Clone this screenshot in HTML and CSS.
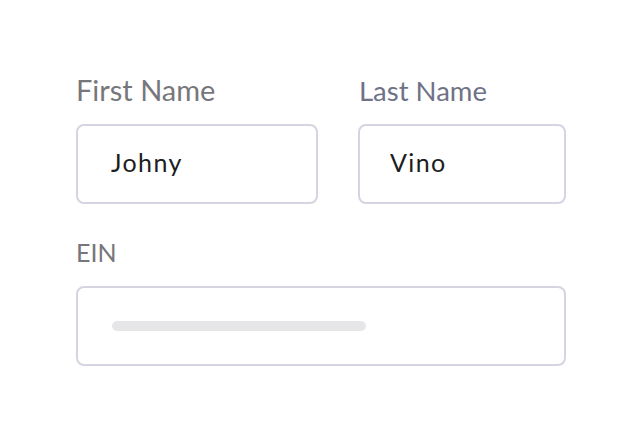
FILE: index.html
```html
<!DOCTYPE html>
<html>
<head>
<meta charset="utf-8">
<link rel="stylesheet" href="styles.css">
</head>
<body>
<form class="form">
  <div class="row">
    <div class="field field-first">
      <div class="label label-first">First Name</div>
      <div class="input"><span class="value">Johny</span></div>
    </div>
    <div class="field field-last">
      <div class="label label-last">Last Name</div>
      <div class="input"><span class="value">Vino</span></div>
    </div>
  </div>
  <div class="field field-ein">
    <div class="label label-ein">EIN</div>
    <div class="input"><span class="skeleton"></span></div>
  </div>
</form>
</body>
</html>
```
FILE: styles.css
```css
html, body {
  margin: 0;
  padding: 0;
  background: #ffffff;
}
body {
  font-family: "Lato", "Noto Sans", sans-serif;
  width: 642px;
  height: 442px;
  overflow: hidden;
}
.form {
  padding: 74px 0 0 76px;
  width: 490px;
}
.row {
  display: grid;
  grid-template-columns: 242px 208px;
  column-gap: 40px;
}
.label {
  box-sizing: border-box;
  height: 32px;
  font-size: 29px;
  line-height: 32px;
  color: #77777b;
  margin-bottom: 18px;
  white-space: nowrap;
}
.label-last {
  color: #6f7287;
  font-size: 27.5px;
  padding-top: 1px;
  padding-left: 1px;
}
.label-ein {
  font-size: 25px;
}
.field-ein {
  margin-top: 32px;
}
.input {
  box-sizing: border-box;
  height: 80px;
  border: 2px solid #d4d5e0;
  border-radius: 8px;
  display: flex;
  align-items: center;
  padding-left: 33px;
}
.field-first .input,
.field-last .input {
  padding-bottom: 4px;
}
.field-last .input {
  padding-left: 30px;
}
.value {
  font-size: 25px;
  letter-spacing: 1.4px;
  color: #1c1d21;
}
.skeleton {
  display: block;
  width: 254px;
  height: 10px;
  border-radius: 5px;
  background: #e6e6e8;
  margin-left: 1px;
}
```
